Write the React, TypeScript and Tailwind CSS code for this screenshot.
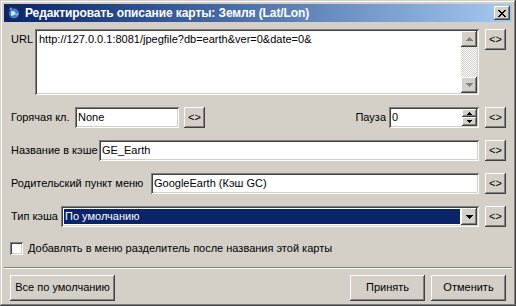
import React from 'react';

const raised =
  'bg-[#d4d0c8] shadow-[inset_-1px_-1px_#404040,inset_1px_1px_#ffffff,inset_-2px_-2px_#808080,inset_2px_2px_#d4d0c8]';
const sunken =
  'bg-white shadow-[inset_1px_1px_#808080,inset_-1px_-1px_#ffffff,inset_2px_2px_#404040,inset_-2px_-2px_#d4d0c8]';

function Arrow({ dir, color = '#000' }: { dir: 'up' | 'down'; color?: string }) {
  // 7x4 triangle, Win2000 style
  return (
    <svg width="7" height="4" viewBox="0 0 7 4" shapeRendering="crispEdges">
      {dir === 'up' ? (
        <path d="M3 0h1v1h1v1h1v1h1v1H0V3h1V2h1V1h1z" fill={color} />
      ) : (
        <path d="M0 0h7v1H6v1H5v1H4v1H3V3H2V2H1V1H0z" fill={color} />
      )}
    </svg>
  );
}

function SmallArrow({ dir }: { dir: 'up' | 'down' }) {
  return (
    <svg width="5" height="3" viewBox="0 0 5 3" shapeRendering="crispEdges">
      {dir === 'up' ? (
        <path d="M2 0h1v1h1v1h1v1H0V2h1V1h1z" fill="#000" />
      ) : (
        <path d="M0 0h5v1H4v1H3v1H2V2H1V1H0z" fill="#000" />
      )}
    </svg>
  );
}

function XButton() {
  return (
    <div className={`${raised} w-[21px] h-[21px] shrink-0 flex items-center justify-center text-[11px] leading-none pb-[1px]`}>
      &lt;&gt;
    </div>
  );
}

function Field({ value, className }: { value: string; className: string }) {
  return (
    <div className={`${sunken} h-[21px] flex items-center pl-[3px] text-[11px] ${className}`}>{value}</div>
  );
}

function GlobeIcon() {
  return (
    <svg width="16" height="16" viewBox="0 0 16 16">
      <circle cx="8" cy="8" r="7.5" fill="#1b2a4a" />
      <circle cx="8" cy="8.5" r="5" fill="#3b7fd8" />
      <path d="M5 6.5c1.5-1 3-.5 4 .5s.5 2.5-1 3-2.5 1.5-3 0.5z" fill="#cfe6ff" />
      <path d="M9.5 9.5c1 .5 2 0 2.5-1" stroke="#e8f4ff" strokeWidth="1" fill="none" />
      <path d="M3 5l2-3 1 2z" fill="#9fb4d8" />
    </svg>
  );
}

export default function App() {
  return (
    <div className="w-[516px] h-[306px] bg-[#d4d0c8] p-[4px] flex flex-col font-['Liberation_Sans',sans-serif] text-black shadow-[inset_-1px_-1px_#404040,inset_1px_1px_#d4d0c8,inset_-2px_-2px_#808080,inset_2px_2px_#ffffff]">
      {/* title bar */}
      <div className="h-[18px] flex items-center bg-linear-to-r from-[#0a246a] to-[#a6caf0] pl-[2px] pr-[2px]">
        <GlobeIcon />
        <span className="ml-[3px] text-white font-bold text-[12px] leading-none tracking-[-0.1px]">
          Редактировать описание карты: Земля (Lat/Lon)
        </span>
        <div className={`${raised} ml-auto w-[16px] h-[14px] flex items-center justify-center`}>
          <svg width="8" height="7" viewBox="0 0 8 7" shapeRendering="crispEdges">
            <path d="M0 0h2v1h1v1h2V1h1V0h2v1H7v1H6v1H5v1h1v1h1v1h1v1H6V6H5V5H3v1H2v1H0V6h1V5h1V4h1V3H2V2H1V1H0z" fill="#000" />
          </svg>
        </div>
      </div>

      <div className="pl-[6px] pr-[6px] pt-[7px] flex flex-col text-[11px]">
        {/* URL */}
        <div className="flex items-start">
          <div className="w-[25px] pl-[1px] pt-[2px]">URL</div>
          <div className={`${sunken} w-[444px] h-[66px] flex p-[2px]`}>
            <div className="flex-1 pl-[2px] pt-[1px] leading-[14px]">
              http://127.0.0.1:8081/jpegfile?db=earth&amp;ver=0&amp;date=0&amp;
            </div>
            <div className="w-[16px] flex flex-col">
              <div className={`${raised} h-[16px] flex items-center justify-center`}>
                <Arrow dir="up" color="#808080" />
              </div>
              <div className="flex-1 bg-[repeating-conic-gradient(#ffffff_0_25%,#d4d0c8_0_50%)] bg-size-[2px_2px]" />
              <div className={`${raised} h-[16px] flex items-center justify-center`}>
                <Arrow dir="down" color="#808080" />
              </div>
            </div>
          </div>
          <div className="ml-[6px]">
            <XButton />
          </div>
        </div>

        {/* hotkey + pause */}
        <div className="flex items-center mt-[12px]">
          <div className="w-[65px] pl-[1px]">Горячая кл.</div>
          <Field value="None" className="w-[104px]" />
          <div className="ml-[5px]">
            <XButton />
          </div>
          <div className="ml-auto mr-[3px]">Пауза</div>
          <div className={`${sunken} w-[90px] h-[21px] flex p-[2px]`}>
            <div className="flex-1 pl-[1px] flex items-center">0</div>
            <div className="w-[15px] flex flex-col">
              <div className={`${raised} h-[8px] flex items-center justify-center`}>
                <SmallArrow dir="up" />
              </div>
              <div className={`${raised} h-[9px] flex items-center justify-center`}>
                <SmallArrow dir="down" />
              </div>
            </div>
          </div>
          <div className="ml-[6px]">
            <XButton />
          </div>
        </div>

        {/* cache name */}
        <div className="flex items-center mt-[12px]">
          <div className="w-[89px] pl-[1px]">Название в кэше</div>
          <Field value="GE_Earth" className="w-[380px]" />
          <div className="ml-[6px]">
            <XButton />
          </div>
        </div>

        {/* parent menu */}
        <div className="flex items-center mt-[12px]">
          <div className="w-[141px] pl-[1px]">Родительский пункт меню</div>
          <Field value="GoogleEarth (Кэш GC)" className="w-[328px]" />
          <div className="ml-[6px]">
            <XButton />
          </div>
        </div>

        {/* cache type */}
        <div className="flex items-center mt-[12px]">
          <div className="w-[51px] pl-[1px]">Тип кэша</div>
          <div className={`${sunken} w-[418px] h-[21px] flex p-[2px]`}>
            <div className="flex-1 m-[1px] bg-[#0a246a] text-white flex items-center pl-[1px]">По умолчанию</div>
            <div className={`${raised} w-[16px] flex items-center justify-center`}>
              <Arrow dir="down" />
            </div>
          </div>
          <div className="ml-[6px]">
            <XButton />
          </div>
        </div>

        {/* checkbox */}
        <div className="flex items-center mt-[13px]">
          <div className={`${sunken} w-[13px] h-[13px]`} />
          <div className="ml-[5px]">Добавлять в меню разделитель после названия этой карты</div>
        </div>
      </div>

      {/* separator */}
      <div className="mt-[10px] h-[2px] border-t border-t-[#808080] border-b border-b-white" />

      <div className="flex pl-[6px] pr-[6px] mt-[6px] text-[11px]">
        <div className={`${raised} w-[105px] h-[26px] flex items-center justify-center`}>Все по умолчанию</div>
        <div className={`${raised} ml-auto w-[75px] h-[26px] flex items-center justify-center`}>Принять</div>
        <div className={`${raised} ml-[6px] w-[75px] h-[26px] flex items-center justify-center`}>Отменить</div>
      </div>
    </div>
  );
}
